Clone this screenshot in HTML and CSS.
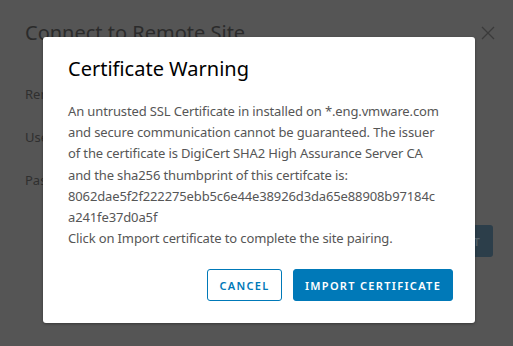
FILE: index.html
```html
<!DOCTYPE html>
<html lang="en">
<head>
    <meta charset="UTF-8">
    <meta name="viewport" content="width=device-width, initial-scale=1.0">
    <title>Certificate Warning</title>
    <link rel="stylesheet" href="styles.css">
</head>
<body>
    <!-- modal underneath, dimmed by the backdrop -->
    <div class="back-modal">
        <div class="back-header">
            <h2>Connect to Remote Site</h2>
            <svg class="back-close" width="14" height="14" viewBox="0 0 14 14">
                <path d="M1 1 L13 13 M13 1 L1 13" stroke="#3a3a3a" stroke-width="1.3" fill="none"/>
            </svg>
        </div>
        <div class="back-form">
            <label>Remote site</label>
            <label>User name</label>
            <label>Password</label>
        </div>
        <div class="back-footer">
            <button class="back-btn">CONNECT</button>
        </div>
    </div>

    <div class="dialog">
        <h3>Certificate Warning</h3>
        <p class="message">
            An untrusted SSL Certificate in installed on *.eng.vmware.com<br>
            and secure communication cannot be guaranteed. The issuer<br>
            of the certificate is DigiCert SHA2 High Assurance Server CA<br>
            and the sha256 thumbprint of this certifcate is:<br>
            8062dae5f2f222275ebb5c6e44e38926d3da65e88908b97184c<br>
            a241fe37d0a5f<br>
            Click on Import certificate to complete the site pairing.
        </p>
        <div class="actions">
            <button class="btn btn-outline">CANCEL</button>
            <button class="btn btn-primary">IMPORT CERTIFICATE</button>
        </div>
    </div>
</body>
</html>
```

FILE: styles.css
```css
/* Page + dimmed modal behind */
body {
    font-family: "Noto Sans", sans-serif;
    margin: 0;
    padding: 0;
    width: 513px;
    height: 346px;
    overflow: hidden;
    background: #555555;
    position: relative;
}
.back-modal {
    padding: 20px 20px 0 25px;
    color: #2e2e2e;
}
.back-header {
    display: flex;
    justify-content: space-between;
    align-items: center;
}
.back-header h2 {
    margin: 0;
    font-size: 20px;
    font-weight: 400;
    line-height: 26px;
    color: #2b2b2b;
}
.back-close {
    margin-right: -2px;
}
.back-form {
    display: flex;
    flex-direction: column;
    gap: 24px;
    margin-top: 39px;
}
.back-form label {
    font-size: 13px;
    line-height: 19px;
    color: #2f2f2f;
}
.back-footer {
    display: flex;
    justify-content: flex-end;
    margin-top: 35px;
}
.back-btn {
    height: 32px;
    padding: 0 12px;
    border: none;
    border-radius: 3px;
    background: #2c3e4a;
    color: #56656f;
    font-family: inherit;
    font-size: 11px;
    font-weight: 600;
    letter-spacing: 0.12em;
}

/* Front dialog */
.dialog {
    position: absolute;
    top: 37px;
    left: 43px;
    width: 432px;
    height: 286px;
    box-sizing: border-box;
    padding: 20px 22px 22px 25px;
    background: #fff;
    border-radius: 3px;
    box-shadow: 0 1px 3px rgba(0, 0, 0, 0.35);
    display: flex;
    flex-direction: column;
}
.dialog h3 {
    margin: 0;
    font-size: 20px;
    font-weight: 400;
    line-height: 24px;
    color: #000;
}
.message {
    margin: 20px 0 0;
    font-size: 13px;
    line-height: 21.2px;
    letter-spacing: -0.13px;
    color: #565656;
    white-space: nowrap;
}
.actions {
    display: flex;
    justify-content: flex-end;
    gap: 11px;
    margin-top: auto;
}
.btn {
    height: 32px;
    box-sizing: border-box;
    border-radius: 3px;
    font-family: inherit;
    font-size: 11px;
    font-weight: 600;
    letter-spacing: 0.12em;
    cursor: pointer;
}
.btn-outline {
    width: 75px;
    background: #fff;
    border: 1px solid #0079b8;
    color: #0079b8;
}
.btn-primary {
    width: 160px;
    background: #0079b8;
    border: 1px solid #0079b8;
    color: #fff;
}
```
